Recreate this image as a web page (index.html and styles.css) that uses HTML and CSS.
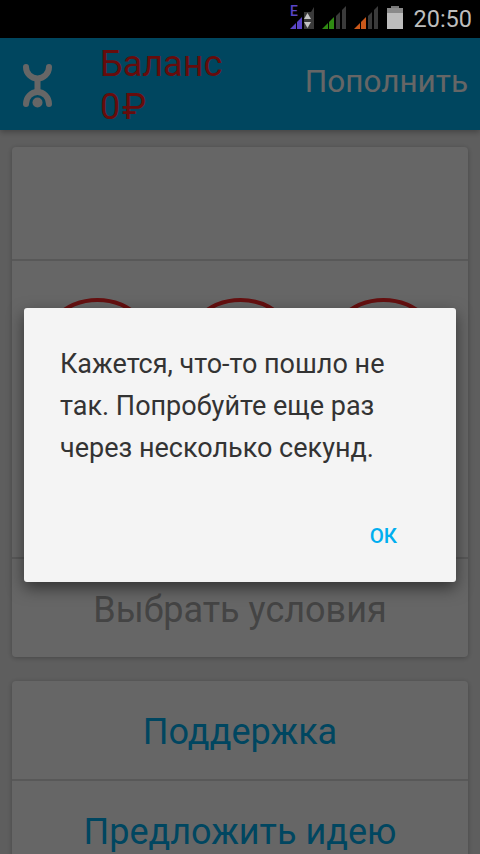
FILE: index.html
```html
<!DOCTYPE html>
<html>
<head>
    <meta charset="utf-8">
    <link rel="stylesheet" href="styles.css">
</head>
<body>
    <div class="status-bar">
        <svg class="status-icons" width="120" height="38" viewBox="285 0 120 38">
            <text x="291" y="16" class="net-type">E</text>
            <polygon points="291,29 297,29 297,23" fill="#5a45c8"/>
            <polygon points="298,29 303,29 303,17 298,22" fill="#5a45c8"/>
            <rect x="305" y="12" width="7" height="17" fill="#3a3a3a"/>
            <polygon points="308.500,13 312,19 305,19" fill="#c4c4c4"/>
            <polygon points="308.500,28 312,22 305,22" fill="#c4c4c4"/>
            <polygon points="312,12 315,7 315,29 312,29" fill="#3a3a3a"/>

            <polygon points="323,29 329,29 329,23" fill="#2f8a12"/>
            <polygon points="330,29 335,29 335,17 330,22" fill="#2f8a12"/>
            <polygon points="337,29 341,29 341,12 337,16" fill="#3a3a3a"/>
            <polygon points="343,29 347,29 347,6 343,10" fill="#3a3a3a"/>

            <polygon points="355,29 361,29 361,23" fill="#c9581a"/>
            <polygon points="362,29 367,29 367,17 362,22" fill="#c9581a"/>
            <polygon points="369,29 373,29 373,12 369,16" fill="#3a3a3a"/>
            <polygon points="375,29 379,29 379,6 375,10" fill="#3a3a3a"/>

            <rect x="392" y="6" width="8" height="3" fill="#777"/>
            <rect x="388" y="8" width="16" height="5" fill="#8a8a8a"/>
            <rect x="388" y="13" width="16" height="16" fill="#bdbdbd"/>
        </svg>
        <span class="clock">20:50</span>
    </div>

    <div class="app">
        <header class="top-bar">
            <svg class="logo" width="32" height="46" viewBox="0 0 32 46">
                <path d="M4 4 A11.500 11.500 0 0 0 27 4" fill="none" stroke="#fff" stroke-width="6" stroke-linecap="round"/>
                <path d="M15.500 15 V29" fill="none" stroke="#fff" stroke-width="6"/>
                <path d="M4 41 A11.500 12 0 0 1 27 41" fill="none" stroke="#fff" stroke-width="6" stroke-linecap="round"/>
                <circle cx="15.500" cy="39.500" r="5" fill="#fff"/>
            </svg>
            <div class="balance">
                <div>Баланс</div>
                <div>0<span class="rouble">₽</span></div>
            </div>
            <span class="top-up">Пополнить</span>
        </header>

        <main class="content">
            <section class="card">
                <div class="card-row card-head"></div>
                <div class="card-row circles">
                    <div class="circle"></div>
                    <div class="circle"></div>
                    <div class="circle"></div>
                </div>
                <div class="card-row action muted">Выбрать условия</div>
            </section>

            <section class="card">
                <div class="card-row action">Поддержка</div>
                <div class="card-row action">Предложить идею</div>
            </section>
        </main>

        <!-- dimmed layer with the error dialog -->
        <div class="scrim">
            <div class="dialog">
                <p class="dialog-text">Кажется, что-то пошло не так. Попробуйте еще раз через несколько секунд.</p>
                <div class="dialog-buttons">
                    <span class="dialog-ok">ОК</span>
                </div>
            </div>
        </div>
    </div>
</body>
</html>
```

FILE: styles.css
```css
html, body {
    margin: 0;
    height: 854px;
    overflow: hidden;
}
body {
    background: #000;
    font-family: Roboto, "Noto Sans", sans-serif;
    display: flex;
    flex-direction: column;
}

.status-bar {
    height: 38px;
    flex: none;
    display: flex;
    align-items: center;
    justify-content: flex-end;
    background: #000;
    padding-right: 8px;
}
.status-icons { margin-right: 9px; }
.net-type {
    font-family: Roboto, sans-serif;
    font-size: 14px;
    font-weight: 500;
    fill: #5a45c8;
}
.clock {
    color: #bdbdbd;
    font-size: 23.500px;
}

.app {
    position: relative;
    flex: 1;
    overflow: hidden;
    background: #ebebeb;
}

.top-bar {
    height: 92px;
    box-sizing: border-box;
    padding-top: 3px;
    display: flex;
    align-items: center;
    background: #00b0ee;
    box-shadow: 0 2px 6px rgba(0,0,0,.3);
    position: relative;
}
.logo {
    margin-left: 22px;
    flex: none;
}
.balance {
    margin-left: 46px;
    color: #ff2020;
    font-size: 36px;
    line-height: 43px;
    flex: 1;
}
.rouble { margin-left: 2px; }
.top-up {
    color: #fff;
    font-size: 31.500px;
    margin-right: 12px;
    margin-bottom: 9px;
}

.content {
    padding: 17px 12px;
    display: flex;
    flex-direction: column;
    gap: 24px;
}
.card {
    background: #fff;
    border-radius: 4px;
    box-shadow: 0 1px 5px rgba(0,0,0,.25);
}
.card-row { border-top: 2px solid #ddd; }
.card-row:first-child { border-top: none; }
.card-head { height: 112px; }
.circles {
    height: 298px;
    box-sizing: border-box;
    padding-top: 37px;
    display: flex;
    justify-content: center;
    gap: 18px;
}
.circle {
    width: 125px;
    height: 125px;
    box-sizing: border-box;
    border: 4px solid #ff2828;
    border-radius: 50%;
}
.action {
    height: 94px;
    padding-top: 4px;
    display: flex;
    align-items: center;
    justify-content: center;
    color: #00aeef;
    font-size: 36px;
}
.muted { color: #aaa; }

.scrim {
    position: absolute;
    inset: 0;
    padding-bottom: 2px;
    background: rgba(0,0,0,.6);
    display: flex;
    align-items: center;
    justify-content: center;
}
.dialog {
    width: 432px;
    height: 274px;
    box-sizing: border-box;
    padding: 35px 36px 0;
    background: #f4f4f4;
    border-radius: 3px;
    box-shadow: 0 6px 16px rgba(0,0,0,.5);
    display: flex;
    flex-direction: column;
}
.dialog-text {
    margin: 0;
    color: #333;
    font-size: 27px;
    line-height: 42px;
}
.dialog-buttons {
    margin-top: 55px;
    display: flex;
    justify-content: flex-end;
    padding-right: 23px;
}
.dialog-ok {
    color: #00aeef;
    font-size: 20.500px;
    font-weight: 500;
}
```
